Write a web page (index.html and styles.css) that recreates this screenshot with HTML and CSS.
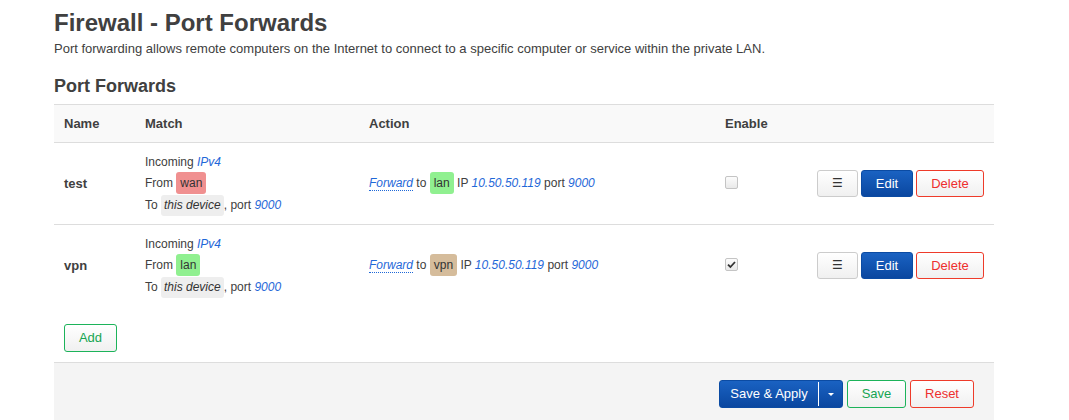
FILE: index.html
```html
<!DOCTYPE html>
<html>
<head>
<meta charset="utf-8">
<link rel="stylesheet" href="styles.css">
</head>
<body>
<div class="main">
  <h2 class="page-title">Firewall - Port Forwards</h2>
  <div class="descr">Port forwarding allows remote computers on the Internet to connect to a specific computer or service within the private LAN.</div>
  <h3 class="section-title">Port Forwards</h3>

  <div class="table">
    <div class="tr th">
      <div class="td">Name</div>
      <div class="td">Match</div>
      <div class="td">Action</div>
      <div class="td">Enable</div>
      <div class="td"></div>
    </div>

    <div class="tr">
      <div class="td name">test</div>
      <div class="td match">
        <div class="l1">Incoming <a class="lnk">IPv4</a></div>
        <div class="l2">From <span class="zone wan">wan</span></div>
        <div class="l3">To <span class="dev">this device</span>, port <a class="lnk">9000</a></div>
      </div>
      <div class="td action"><a class="lnk dotted">Forward</a> to <span class="zone lan">lan</span> IP <a class="lnk">10.50.50.119</a> port <a class="lnk">9000</a></div>
      <div class="td enable"><span class="cb"></span></div>
      <div class="td btns">
        <span class="btn menu">☰</span>
        <span class="btn edit">Edit</span>
        <span class="btn del">Delete</span>
      </div>
    </div>

    <div class="tr">
      <div class="td name">vpn</div>
      <div class="td match">
        <div class="l1">Incoming <a class="lnk">IPv4</a></div>
        <div class="l2">From <span class="zone lan">lan</span></div>
        <div class="l3">To <span class="dev">this device</span>, port <a class="lnk">9000</a></div>
      </div>
      <div class="td action"><a class="lnk dotted">Forward</a> to <span class="zone vpn">vpn</span> IP <a class="lnk">10.50.50.119</a> port <a class="lnk">9000</a></div>
      <div class="td enable"><span class="cb checked"><svg width="11" height="11" viewBox="0 0 11 11"><path d="M2 5.6 L4.4 8 L9 3" fill="none" stroke="#333" stroke-width="1.8"/></svg></span></div>
      <div class="td btns">
        <span class="btn menu">☰</span>
        <span class="btn edit">Edit</span>
        <span class="btn del">Delete</span>
      </div>
    </div>
  </div>

  <div class="add-row">
    <span class="btn add">Add</span>
  </div>

  <div class="page-actions">
    <span class="split">
      <span class="split-main">Save &amp; Apply</span><span class="split-drop"><span class="caret"></span></span>
    </span>
    <span class="btn save">Save</span>
    <span class="btn reset">Reset</span>
  </div>
</div>
</body>
</html>
```

FILE: styles.css
```css
html, body {
  margin: 0;
  padding: 0;
  background: #fff;
}
body {
  font-family: "Liberation Sans", Arial, sans-serif;
  color: #404040;
  font-size: 13px;
  line-height: 18px;
}
.main {
  width: 940px;
  margin-left: 54px;
}
.page-title {
  margin: 0;
  padding-top: 9px;
  font-size: 24px;
  line-height: normal;
  font-weight: bold;
}
.descr {
  margin-top: 3px;
  font-size: 13px;
  line-height: 18px;
}
.section-title {
  margin: 18px 0 0 0;
  font-size: 18px;
  line-height: 20px;
  font-weight: bold;
}
.table {
  margin-top: 8px;
}
.tr {
  display: grid;
  grid-template-columns: 81px 224px 356px 92px 1fr;
  align-items: center;
  border-top: 1px solid #ddd;
}
.td {
  padding: 0 10px;
}
.th {
  background: #f9f9f9;
  font-weight: bold;
  height: 37px;
}
.tr:not(.th) {
  height: 81px;
}
.name {
  font-weight: bold;
}
.match {
  font-size: 12px;
}
.match .l1 {
  line-height: 20px;
}
.match .l2, .match .l3 {
  line-height: 22px;
  height: 22px;
}
.lnk {
  color: #1f68d8;
  font-style: italic;
  text-decoration: none;
}
.dotted {
  border-bottom: 1px dotted #1f68d8;
}
.zone, .dev {
  display: inline-block;
  padding: 0 4px;
  border-radius: 3px;
  line-height: 22px;
  color: #333;
}
.dev {
  background: #eee;
  font-style: italic;
  padding: 0 3px;
  line-height: 21px;
}
.wan { background: #f09090; }
.lan { background: #90f090; }
.vpn { background: #d5bc9b; }
.action {
  font-size: 12px;
}
.action .zone {
  vertical-align: middle;
  margin-top: -2px;
}
.cb {
  display: inline-flex;
  align-items: center;
  justify-content: center;
  width: 11px;
  height: 11px;
  border: 1px solid #c4c4c4;
  border-radius: 2px;
  background: linear-gradient(#fcfcfc, #e9e9e9);
  vertical-align: middle;
  margin-top: -3px;
}
.btns {
  display: flex;
  justify-content: flex-end;
  gap: 3px;
  padding-right: 11px;
}
.btn {
  display: inline-block;
  box-sizing: border-box;
  height: 27px;
  line-height: 25px;
  padding: 0 14px;
  border: 1px solid #ccc;
  border-radius: 3px;
  background: linear-gradient(#ffffff, #f0f0f0);
  font-size: 13px;
  color: #404040;
  text-align: center;
}
.menu {
  width: 41px;
  padding: 0;
  font-family: "DejaVu Sans", sans-serif;
  font-size: 12px;
  color: #333;
}
.edit {
  width: 52px;
  padding: 0;
  color: #fff;
  border-color: #0b4ba3;
  background: linear-gradient(#1a62c2, #0a47a0);
}
.del {
  width: 68px;
  padding: 0;
  color: #ee2f2f;
  border-color: #ee3b2a;
}
.add-row {
  padding: 18px 10px 10px 10px;
}
.add {
  width: 53px;
  height: 28px;
  line-height: 26px;
  padding: 0;
  color: #15a552;
  border-color: #1cb35a;
}
.page-actions {
  background: #f4f4f4;
  border-top: 1px solid #ddd;
  display: flex;
  justify-content: flex-end;
  gap: 4px;
  padding: 17px 20px 20px 20px;
  height: 60px;
  box-sizing: border-box;
}
.split {
  display: inline-flex;
  height: 28px;
  border: 1px solid #0b4ba3;
  border-radius: 3px;
  background: linear-gradient(#1a62c2, #0a47a0);
  color: #fff;
  box-sizing: border-box;
}
.split-main {
  width: 98px;
  text-align: center;
  font-size: 13px;
  border-right: 1px solid #fff;
  margin: 1px 0;
  line-height: 24px;
}
.split-drop {
  width: 23px;
  display: flex;
  align-items: center;
  justify-content: center;
}
.caret {
  width: 0;
  height: 0;
  border-left: 3px solid transparent;
  border-right: 3px solid transparent;
  border-top: 3px solid #fff;
}
.save {
  width: 59px;
  height: 28px;
  line-height: 26px;
  padding: 0;
  color: #15a552;
  border-color: #1cb35a;
}
.reset {
  width: 64px;
  height: 28px;
  line-height: 26px;
  padding: 0;
  color: #ee2f2f;
  border-color: #ee3b2a;
}
```
